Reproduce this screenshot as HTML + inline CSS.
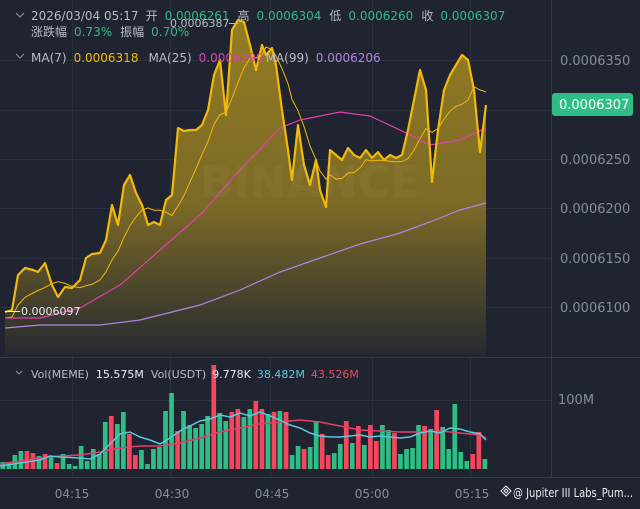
<!DOCTYPE html>
<html><head><meta charset="utf-8"><style>
html,body{margin:0;padding:0;background:#1f2430;width:640px;height:509px;overflow:hidden}
svg{display:block}
text{font-family:"DejaVu Sans","Noto Sans CJK SC",sans-serif}
</style></head><body>
<svg id="s" width="640" height="509" viewBox="0 0 640 509" xmlns="http://www.w3.org/2000/svg">
<defs>
<linearGradient id="g" gradientUnits="userSpaceOnUse" x1="0" y1="20" x2="0" y2="355">
<stop offset="0" stop-color="#937c24"/>
<stop offset="0.55" stop-color="#7c6a26"/>
<stop offset="1" stop-color="#262a30"/>
</linearGradient>
</defs>
<rect width="640" height="509" fill="#1f2430"/>
<g stroke="#2a303c" stroke-width="1">
<line x1="72.5" y1="0" x2="72.5" y2="477"/><line x1="170.5" y1="0" x2="170.5" y2="477"/><line x1="270.5" y1="0" x2="270.5" y2="477"/><line x1="372.5" y1="0" x2="372.5" y2="477"/><line x1="470.5" y1="0" x2="470.5" y2="477"/>
<line x1="0" y1="60.5" x2="551" y2="60.5"/><line x1="0" y1="110.5" x2="551" y2="110.5"/><line x1="0" y1="159.5" x2="551" y2="159.5"/><line x1="0" y1="208.5" x2="551" y2="208.5"/><line x1="0" y1="258.5" x2="551" y2="258.5"/><line x1="0" y1="307.5" x2="551" y2="307.5"/>
<line x1="0" y1="400.5" x2="551" y2="400.5"/>
</g>
<line x1="551.5" y1="0" x2="551.5" y2="477" stroke="#343a46"/>
<line x1="0" y1="357.5" x2="640" y2="357.5" stroke="#343a46"/>
<line x1="0" y1="477.5" x2="640" y2="477.5" stroke="#343a46"/>
<g id="price"></g>
<text x="310" y="197" font-size="44" font-weight="bold" fill="#ffffff" fill-opacity="0.04" text-anchor="middle">BINANCE</text>
<g id="vol"></g>
<path d="M16 13l4 4 4-4" stroke="#848e9c" fill="none" stroke-width="1.2"/>
<text y="20" font-size="12" fill="#b7bdc6"><tspan x="31">2026/03/04 05:17</tspan><tspan dx="7">开</tspan><tspan dx="7" fill="#2ebd85">0.0006261</tspan><tspan dx="8">高</tspan><tspan dx="7" fill="#2ebd85">0.0006304</tspan><tspan dx="8">低</tspan><tspan dx="7" fill="#2ebd85">0.0006260</tspan><tspan dx="8">收</tspan><tspan dx="7" fill="#2ebd85">0.0006307</tspan></text>
<text y="36" font-size="12" fill="#b7bdc6"><tspan x="31">涨跌幅</tspan><tspan dx="7" fill="#2ebd85">0.73%</tspan><tspan dx="8">振幅</tspan><tspan dx="7" fill="#2ebd85">0.70%</tspan></text>
<text x="170" y="27" font-size="11" fill="#b7bdc6">0.0006387</text>
<line x1="229" y1="23.5" x2="238" y2="23.5" stroke="#b7bdc6"/>
<path d="M16 54l4 4 4-4" stroke="#848e9c" fill="none" stroke-width="1.2"/>
<text y="62" font-size="12" fill="#b7bdc6"><tspan x="31">MA(7)</tspan><tspan dx="7" fill="#f0b90b">0.0006318</tspan><tspan dx="10">MA(25)</tspan><tspan dx="7" fill="#e040b0">0.0006290</tspan><tspan dx="2">MA(99)</tspan><tspan dx="7" fill="#b084e6">0.0006206</tspan></text>
<g font-size="13" fill="#848e9c">
<text x="560" y="65">0.0006350</text><text x="560" y="164">0.0006250</text><text x="560" y="213">0.0006200</text><text x="560" y="263">0.0006150</text><text x="560" y="312">0.0006100</text>
<text x="558" y="404">100M</text>
</g>
<rect x="552" y="93" width="81" height="23" rx="3" fill="#2ebd85"/>
<text x="559" y="109" font-size="13" fill="#ffffff">0.0006307</text>
<line x1="5" y1="311.5" x2="20" y2="311.5" stroke="#eaecef"/>
<text x="21" y="315" font-size="11" fill="#eaecef">0.0006097</text>
<path d="M16 371l3 3 3-3" stroke="#848e9c" fill="none" stroke-width="1.1"/>
<text y="378" font-size="11" fill="#b7bdc6"><tspan x="31">Vol(MEME)</tspan><tspan dx="7" fill="#eaecef">15.575M</tspan><tspan dx="7">Vol(USDT)</tspan><tspan dx="6" fill="#eaecef">9.778K</tspan><tspan dx="6" fill="#5bc8dc">38.482M</tspan><tspan dx="6" fill="#f6465d">43.526M</tspan></text>
<g font-size="12" fill="#848e9c" text-anchor="middle">
<text x="72" y="498">04:15</text><text x="172" y="498">04:30</text><text x="272" y="498">04:45</text><text x="372" y="498">05:00</text><text x="472" y="498">05:15</text>
</g>
<rect x="494" y="482" width="146" height="27" fill="#1f2430"/>
<path d="M506 486l5 5-5 5-5-5z M506 489l2 2-2 2-2-2z" fill="none" stroke="#eaecef" stroke-width="1"/>
<text x="513" y="497" font-size="12" fill="#eaecef" textLength="120" lengthAdjust="spacingAndGlyphs">@ Jupiter III Labs_Pum...</text>
</svg>
<script>
var NS="http://www.w3.org/2000/svg";
function el(p,t,a){var e=document.createElementNS(NS,t);for(var k in a)e.setAttribute(k,a[k]);p.appendChild(e);return e;}
var P=[[5,312],[12,310],[18,275],[25,268],[33,270],[38,272],[45,263],[52,285],[58,297],[65,287],[72,288],[80,280],[86,258],[92,254],[100,253],[106,240],[112,205],[118,225],[124,185],[130,175],[136,193],[142,205],[148,225],[154,222],[160,225],[166,200],[172,195],[178,128],[184,131],[190,130],[196,130],[202,125],[208,110],[214,75],[220,60],[226,115],[232,30],[238,20],[244,22],[250,45],[256,70],[262,45],[266,55],[272,48],[276,65],[282,110],[288,150],[292,180],[298,125],[304,165],[310,185],[316,160],[320,190],[326,207],[330,150],[336,155],[342,160],[348,148],[354,155],[360,158],[366,150],[372,158],[378,152],[384,160],[390,155],[396,158],[402,155],[408,130],[414,100],[420,70],[426,90],[432,182],[438,130],[444,90],[450,75],[456,65],[462,55],[468,60],[474,90],[480,152],[486,105]];
var pg=document.getElementById('price');
var d="M5 355 L"+P.map(function(p){return p.join(' ')}).join(' L')+" L486 355 Z";
el(pg,'path',{d:d,fill:'url(#g)'});
function ma(n){var o=[];for(var i=0;i<P.length;i++){var s=0,c=0;for(var j=Math.max(0,i-n+1);j<=i;j++){s+=P[j][1];c++;}o.push([P[i][0],s/c]);}return o;}
el(pg,'polyline',{points:ma(7).map(function(p){return p[0]+','+(p[1]+6).toFixed(1)}).join(' '),fill:'none',stroke:'#f0b90b','stroke-width':1});
var M25=[[5,318],[40,318],[80,308],[120,285],[160,250],[200,215],[240,170],[280,128],[300,120],[340,112],[370,116],[400,130],[430,145],[460,140],[486,128]];
el(pg,'polyline',{points:M25.join(' '),fill:'none',stroke:'#e040b0','stroke-width':1.2});
var M99=[[5,328],[40,325],[100,325],[140,320],[200,305],[240,290],[280,272],[320,258],[360,244],[400,233],[430,222],[460,210],[486,203]];
el(pg,'polyline',{points:M99.join(' '),fill:'none',stroke:'#b084e6','stroke-width':1.2});
el(pg,'polyline',{points:P.join(' '),fill:'none',stroke:'#f0b90b','stroke-width':2.2,'stroke-linejoin':'round'});
var V="g7,g7,g14,g18,r18,r16,g13,r15,g13,r6,g15,g5,g3,g23,g8,g20,g15,g47,r53,g45,g57,r35,r14,g19,g5,g20,g22,g58,g76,r38,g58,g44,g41,g45,g53,r104,g56,g48,r57,r60,g52,g60,r68,r60,g55,r57,g58,r57,g14,g23,r20,g22,g48,r35,r14,g16,g25,r48,g26,r43,g24,r44,r28,g44,g39,r36,g15,g20,g21,g44,r43,g40,r59,g42,g20,g65,g17,g8,r15,r37,g10".split(',');
var vg=document.getElementById('vol');var sp=488/V.length;
V.forEach(function(v,i){var h=+v.slice(1);el(vg,'rect',{x:(i*sp+0.5).toFixed(1),y:469-h,width:(sp-1.3).toFixed(1),height:h,fill:v[0]=='g'?'#2ebd85':'#f6465d'});});
el(vg,'polyline',{points:"0,464 20,461 40,458 60,456 80,455 100,452 120,448 140,446 160,446 180,443 200,438 220,432 240,428 260,424 280,422 300,420 320,422 340,426 360,430 380,431 400,432 420,432 440,431 460,433 480,435 486,438",fill:'none',stroke:'#e0406a','stroke-width':1.5});
el(vg,'polyline',{points:"0,466 20,463 40,460 50,456 60,457 80,458 90,459 100,454 110,444 120,434 130,432 140,437 150,440 160,444 170,438 180,431 190,426 200,421 210,419 220,415 230,417 240,413 250,416 260,412 270,416 280,420 290,425 300,428 310,433 320,436 330,437 340,437 350,436 360,435 370,437 380,436 390,437 400,438 410,437 420,433 430,431 440,433 450,428 460,429 470,432 480,434 486,440",fill:'none',stroke:'#5bc8dc','stroke-width':1.5});
</script>
</body></html>
